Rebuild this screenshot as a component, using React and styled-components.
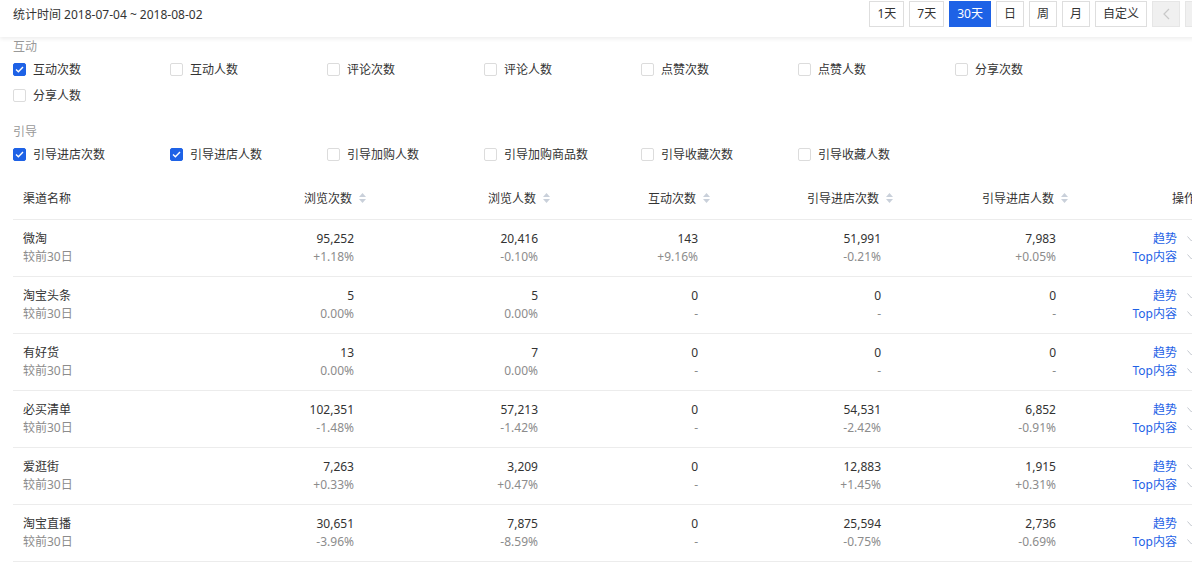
import React from "react";
import styled, { createGlobalStyle } from "styled-components";

const Global = createGlobalStyle`
  html, body { margin: 0; padding: 0; background: #fff; overflow: hidden; }
  body { font-family: "Noto Sans", "Noto Sans CJK SC", sans-serif; font-size: 12px; color: #333; }
`;

const Page = styled.div`
  width: 1226px;
`;

const TopBar = styled.div`
  height: 37px;
  display: flex;
  align-items: flex-start;
  justify-content: space-between;
  padding: 0 13px;
  box-shadow: 0 2px 4px rgba(0, 0, 0, 0.07);
  position: relative;
  z-index: 1;
`;

const Period = styled.div`
  line-height: 30px;
  color: #333;
`;

const BtnGroup = styled.div`
  display: flex;
  gap: 5px;
  padding-top: 1px;
`;

const Btn = styled.div`
  height: 24px;
  line-height: 24px;
  padding: 0 7px;
  min-width: 12px;
  text-align: center;
  border: 1px solid ${(p) => (p.$active ? "#1e62e6" : p.$disabled ? "#e6e6e6" : "#dedede")};
  background: ${(p) => (p.$active ? "#1e62e6" : p.$disabled ? "#f0f0f0" : "#fff")};
  color: ${(p) => (p.$active ? "#fff" : p.$disabled ? "#c8c8c8" : "#333")};
  display: flex;
  align-items: center;
  justify-content: center;
`;

const Content = styled.div`
  padding: 0 0 0 13px;
`;

const GroupLabel = styled.div`
  color: #999;
  height: 19px;
  line-height: 19px;
  margin-top: ${(p) => p.$mt || 0}px;
`;

const CheckGrid = styled.div`
  display: grid;
  grid-template-columns: repeat(7, 157px);
  grid-auto-rows: 26px;
`;

const CheckItem = styled.label`
  display: flex;
  align-items: center;
  gap: 7px;
  color: #333;
`;

const Box = styled.span`
  width: 13px;
  height: 13px;
  box-sizing: border-box;
  border-radius: 2px;
  border: 1px solid ${(p) => (p.$checked ? "#1e62e6" : "#dcdcdc")};
  background: ${(p) => (p.$checked ? "#1e62e6" : "#fff")};
  display: flex;
  align-items: center;
  justify-content: center;
`;

const Table = styled.div`
  margin-top: 10px;
  width: 1213px;
`;

const Row = styled.div`
  display: grid;
  grid-template-columns: 160px 191px 184px 160px 183px 175px 160px;
  border-bottom: 1px solid #ececec;
  height: ${(p) => (p.$head ? 42 : 56)}px;
  align-items: center;
`;

const Th = styled.div`
  padding: 0 10px;
  color: #333;
  display: flex;
  align-items: center;
  justify-content: ${(p) => (p.$right ? "flex-end" : "flex-start")};
  white-space: nowrap;
`;

const HeadInner = styled.div`
  display: flex;
  align-items: center;
  justify-content: flex-end;
  margin-right: -12px;
`;

const OpsHead = styled.div`
  padding-right: 20px;
`;

const Td = styled.div`
  padding: 0 10px;
  text-align: ${(p) => (p.$right ? "right" : "left")};
`;

const Main = styled.div`
  line-height: 18px;
  color: #333;
  white-space: nowrap;
`;

const Sub = styled.div`
  line-height: 18px;
  color: #8c8c8c;
  white-space: nowrap;
`;

const OpsLine = styled.div`
  display: flex;
  justify-content: flex-end;
  align-items: center;
  line-height: 18px;
  padding-right: 20px;
  gap: 10px;
  white-space: nowrap;
`;

const Link = styled.a`
  color: #1e62e6;
  text-decoration: none;
`;

const SortIcon = () => (
  <svg width="7" height="10" viewBox="0 0 7 10" style={{ marginLeft: 7 }}>
    <path d="M3.5 0 L7 4 H0 Z" fill="#c9d0da" />
    <path d="M3.5 10 L7 6 H0 Z" fill="#c9d0da" />
  </svg>
);

const Check = () => (
  <svg width="9" height="7" viewBox="0 0 9 7">
    <path d="M1 3.5 L3.4 5.8 L8 1" stroke="#fff" strokeWidth="1.4" fill="none" />
  </svg>
);

const Chevron = () => (
  <svg width="9" height="6" viewBox="0 0 9 6">
    <path d="M0.5 0.5 L4.5 5 L8.5 0.5" stroke="#c4c8cf" strokeWidth="1" fill="none" />
  </svg>
);

const Arrow = ({ dir }) => (
  <svg width="7" height="12" viewBox="0 0 7 12">
    <path d={dir === "left" ? "M6 1 L1 6 L6 11" : "M1 1 L6 6 L1 11"} stroke="#c8c8c8" strokeWidth="1.2" fill="none" />
  </svg>
);

const interact = [
  ["互动次数", true],
  ["互动人数"],
  ["评论次数"],
  ["评论人数"],
  ["点赞次数"],
  ["点赞人数"],
  ["分享次数"],
  ["分享人数"],
];
const guide = [
  ["引导进店次数", true],
  ["引导进店人数", true],
  ["引导加购人数"],
  ["引导加购商品数"],
  ["引导收藏次数"],
  ["引导收藏人数"],
];

const cols = ["浏览次数", "浏览人数", "互动次数", "引导进店次数", "引导进店人数"];

const rows = [
  ["微淘", ["95,252", "+1.18%"], ["20,416", "-0.10%"], ["143", "+9.16%"], ["51,991", "-0.21%"], ["7,983", "+0.05%"]],
  ["淘宝头条", ["5", "0.00%"], ["5", "0.00%"], ["0", "-"], ["0", "-"], ["0", "-"]],
  ["有好货", ["13", "0.00%"], ["7", "0.00%"], ["0", "-"], ["0", "-"], ["0", "-"]],
  ["必买清单", ["102,351", "-1.48%"], ["57,213", "-1.42%"], ["0", "-"], ["54,531", "-2.42%"], ["6,852", "-0.91%"]],
  ["爱逛街", ["7,263", "+0.33%"], ["3,209", "+0.47%"], ["0", "-"], ["12,883", "+1.45%"], ["1,915", "+0.31%"]],
  ["淘宝直播", ["30,651", "-3.96%"], ["7,875", "-8.59%"], ["0", "-"], ["25,594", "-0.75%"], ["2,736", "-0.69%"]],
];

const CheckList = ({ items }) => (
  <CheckGrid>
    {items.map(([label, checked]) => (
      <CheckItem key={label}>
        <Box $checked={checked}>{checked && <Check />}</Box>
        {label}
      </CheckItem>
    ))}
  </CheckGrid>
);

export default function App() {
  return (
    <Page>
      <Global />
      <TopBar>
        <Period>统计时间 2018-07-04 ~ 2018-08-02</Period>
        <BtnGroup>
          <Btn>1天</Btn>
          <Btn>7天</Btn>
          <Btn $active>30天</Btn>
          <Btn>日</Btn>
          <Btn>周</Btn>
          <Btn>月</Btn>
          <Btn>自定义</Btn>
          <Btn $disabled>
            <Arrow dir="left" />
          </Btn>
          <Btn $disabled>
            <Arrow dir="right" />
          </Btn>
        </BtnGroup>
      </TopBar>
      <Content>
        <GroupLabel>互动</GroupLabel>
        <CheckList items={interact} />
        <GroupLabel $mt={14}>引导</GroupLabel>
        <CheckList items={guide} />
        <Table>
          <Row $head>
            <Th>渠道名称</Th>
            {cols.map((c) => (
              <Th key={c} $right>
                <HeadInner>
                  {c}
                  <SortIcon />
                </HeadInner>
              </Th>
            ))}
            <Th $right>
              <OpsHead>操作</OpsHead>
            </Th>
          </Row>
          {rows.map(([name, ...vals]) => (
            <Row key={name}>
              <Td>
                <Main>{name}</Main>
                <Sub>较前30日</Sub>
              </Td>
              {vals.map(([v, d], i) => (
                <Td key={i} $right>
                  <Main>{v}</Main>
                  <Sub>{d}</Sub>
                </Td>
              ))}
              <Td $right>
                <OpsLine>
                  <Link>趋势</Link>
                  <Chevron />
                </OpsLine>
                <OpsLine>
                  <Link>Top内容</Link>
                  <Chevron />
                </OpsLine>
              </Td>
            </Row>
          ))}
        </Table>
      </Content>
    </Page>
  );
}
